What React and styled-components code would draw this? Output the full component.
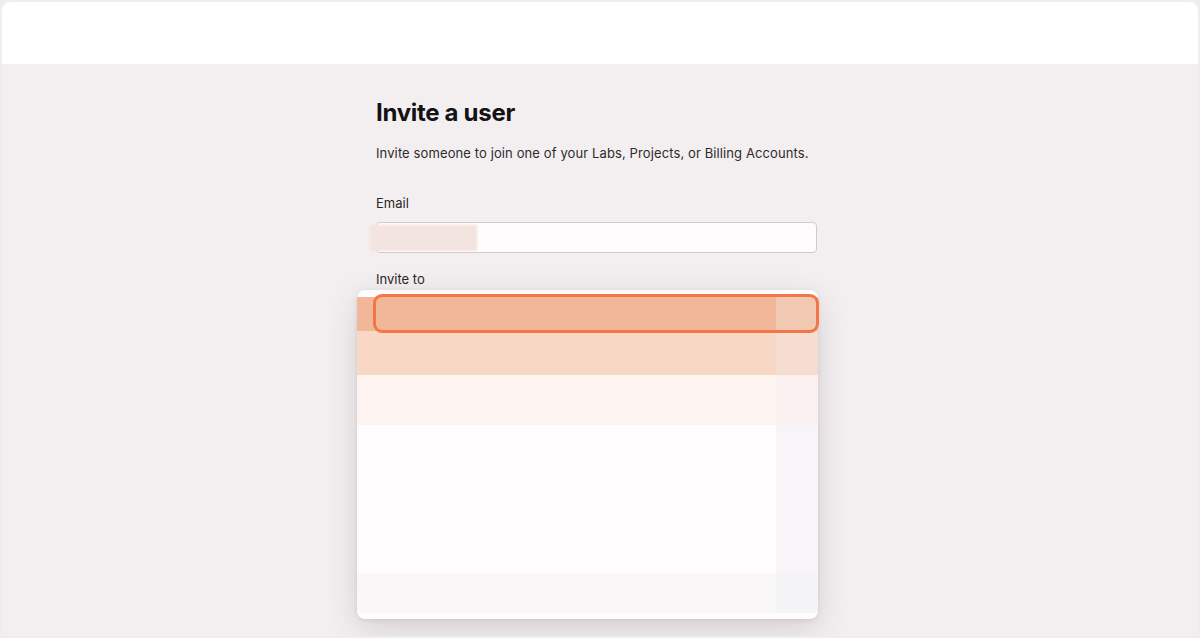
import React from "react";
import styled, { createGlobalStyle } from "styled-components";

const Global = createGlobalStyle`
  html, body { margin: 0; padding: 0; }
  body {
    background: #efeeee;
    font-family: Inter, "Noto Sans", sans-serif;
    -webkit-font-smoothing: antialiased;
  }
  * { box-sizing: border-box; }
`;

const Frame = styled.div`
  margin: 2px;
  height: 634px;
  border-radius: 8px;
  overflow: hidden;
  background: #f3eff0;
  display: flex;
  flex-direction: column;
`;

const Header = styled.header`
  height: 62px;
  flex: none;
  background: #ffffff;
`;

const Main = styled.main`
  flex: 1;
  padding: 33px 0 0 374px;
  position: relative;
`;

const Column = styled.div`
  width: 441px;
  display: flex;
  flex-direction: column;
`;

const Title = styled.h1`
  margin: 0;
  font-size: 24px;
  line-height: 32px;
  font-weight: 700;
  color: #141213;
  letter-spacing: -0.3px;
`;

const Subtitle = styled.p`
  margin: 15px 0 0;
  font-size: 13px;
  line-height: 18px;
  color: #2e2b2c;
  letter-spacing: 0.11px;
`;

const Field = styled.div`
  margin-top: ${(p) => p.$top}px;
  display: flex;
  flex-direction: column;
  position: relative;
`;

const Label = styled.label`
  font-size: 13px;
  line-height: 18px;
  color: #2a2728;
`;

const Input = styled.div`
  margin-top: 10px;
  height: 31px;
  border: 1px solid #cfcbcc;
  border-radius: 4px;
  background: #fffbfc;
  position: relative;
`;

const Blur = styled.span`
  position: absolute;
  left: -7px;
  top: 2px;
  width: 107px;
  height: 26px;
  background: #f3e4df;
  filter: blur(1px);
`;

const Menu = styled.div`
  position: absolute;
  left: -19px;
  top: 20px;
  width: 461px;
  height: 329px;
  background: #fefdfe;
  border-radius: 8px;
  box-shadow: 0 10px 32px rgba(60, 40, 50, 0.16), 0 1px 4px rgba(60, 40, 50, 0.1);
  overflow: hidden;
  display: flex;
  flex-direction: column;
  padding-top: 7px;
`;

const Band = styled.div`
  height: ${(p) => p.$h}px;
  flex: none;
  display: flex;
`;

const BandMain = styled.div`
  flex: 1;
  background: ${(p) => p.$bg};
`;

const BandSide = styled.div`
  width: 42px;
  background: ${(p) => p.$bg};
`;

const Ring = styled.div`
  position: absolute;
  left: -3px;
  top: 24px;
  width: 446px;
  height: 39px;
  border: 3px solid #f47545;
  border-radius: 9px;
`;

const rows = [
  { h: 34, main: "#f0b899", side: "#f1c8b1" },
  { h: 44, main: "#f8d7c5", side: "#f6ddd1" },
  { h: 50, main: "#fdf3f0", side: "#f9f0ef" },
  { h: 148, main: "#fffdfe", side: "#f7f5f7" },
  { h: 40, main: "#faf7f9", side: "#f4f3f5" },
];

export default function App() {
  return (
    <>
      <Global />
      <Frame>
        <Header />
        <Main>
          <Column>
            <Title>Invite a user</Title>
            <Subtitle>
              Invite someone to join one of your Labs, Projects, or Billing Accounts.
            </Subtitle>
            <Field $top={32}>
              <Label>Email</Label>
              <Input>
                <Blur />
              </Input>
            </Field>
            <Field $top={17}>
              <Label>Invite to</Label>
              <Menu>
                {rows.map((r, i) => (
                  <Band key={i} $h={r.h}>
                    <BandMain $bg={r.main} />
                    <BandSide $bg={r.side} />
                  </Band>
                ))}
              </Menu>
              <Ring />
            </Field>
          </Column>
        </Main>
      </Frame>
    </>
  );
}
